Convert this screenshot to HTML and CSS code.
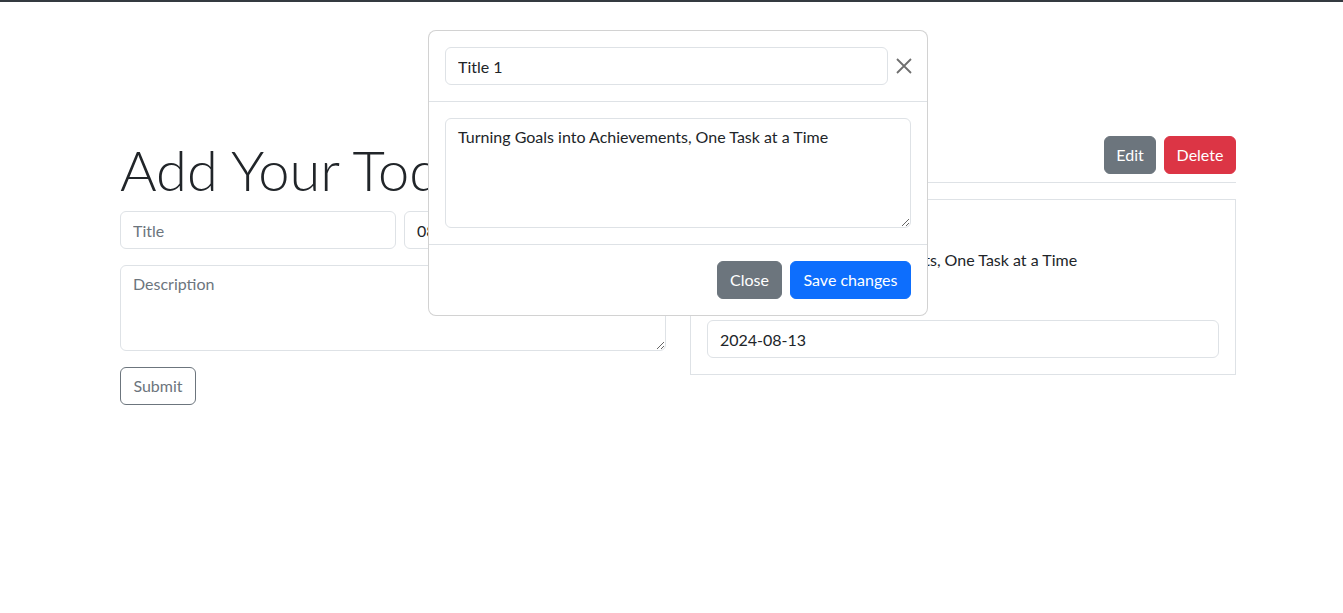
FILE: index.html
```html
<!DOCTYPE html>
<html lang="en">
<head>
<meta charset="utf-8">
<title>Todo</title>
<link rel="stylesheet" href="styles.css">
</head>
<body>
<div class="topbar"></div>
<main class="container">
  <section class="col">
    <h1 class="display">Add Your Todo</h1>
    <form class="add-form">
      <div class="form-row">
        <input class="form-control title-input" type="text" placeholder="Title">
        <input class="form-control date-input" type="text" value="08/13/2024">
      </div>
      <textarea class="form-control desc-input" rows="3" placeholder="Description"></textarea>
      <div><button type="button" class="btn btn-outline-secondary btn-submit">Submit</button></div>
    </form>
  </section>
  <section class="col">
    <div class="list-header">
      <h2 class="list-title">Your Todos</h2>
      <div class="actions">
        <button type="button" class="btn btn-secondary btn-edit">Edit</button>
        <button type="button" class="btn btn-danger btn-delete">Delete</button>
      </div>
    </div>
    <div class="card">
      <h5 class="card-title">Title 1</h5>
      <p class="card-text">Turning Goals into Achievements, One Task at a Time</p>
      <input class="form-control" type="text" value="2024-08-13">
    </div>
  </section>
</main>

<div class="modal">
  <div class="modal-header">
    <input class="form-control" type="text" value="Title 1">
    <button type="button" class="btn-close" aria-label="Close">
      <svg viewBox="0 0 16 16" width="16" height="16"><path d="M1 1L15 15M15 1L1 15" stroke="currentColor" stroke-width="1.8" fill="none"/></svg>
    </button>
  </div>
  <div class="modal-body">
    <textarea class="form-control modal-text" rows="4">Turning Goals into Achievements, One Task at a Time</textarea>
  </div>
  <div class="modal-footer">
    <button type="button" class="btn btn-secondary btn-closem">Close</button>
    <button type="button" class="btn btn-primary btn-save">Save changes</button>
  </div>
</div>
</body>
</html>
```
FILE: styles.css
```css
* { box-sizing: border-box; }
html, body { margin: 0; padding: 0; }
body {
  font-family: "Lato", "Open Sans", sans-serif;
  font-size: 16px;
  line-height: 1.5;
  color: #212529;
  background: #fff;
}
.topbar { height: 2px; background: #343a40; }

.container {
  width: 1116px;
  margin: 134px 0 0 120px;
  display: grid;
  grid-template-columns: 1fr 1fr;
  column-gap: 24px;
}

.display {
  font-size: 56px;
  font-weight: 300;
  line-height: 1.2;
  margin: 0 0 8px;
  white-space: nowrap;
}

.form-control {
  display: block;
  width: 100%;
  font-family: inherit;
  font-size: 16px;
  line-height: 24px;
  color: #212529;
  background: #fff;
  border: 1px solid #dee2e6;
  border-radius: 6px;
  padding: 6px 12px;
  height: 38px;
  outline: none;
}
.form-control::placeholder { color: #6c757d; opacity: 1; }
textarea.form-control { height: auto; resize: vertical; }

.add-form { display: flex; flex-direction: column; }
.form-row { display: flex; gap: 8px; }
.title-input { width: 276px; flex: none; }
.date-input { flex: 1; }
.desc-input { margin-top: 16px; height: 86px; }
.add-form > div:last-child { margin-top: 16px; }

.btn {
  display: inline-block;
  font-family: inherit;
  font-size: 16px;
  line-height: 24px;
  padding: 6px 0;
  text-align: center;
  border: 1px solid transparent;
  border-radius: 6px;
  cursor: pointer;
  background: transparent;
}
.btn-submit { width: 76px; }
.btn-edit { width: 52px; }
.btn-delete { width: 72px; }
.btn-closem { width: 65px; }
.btn-save { width: 121px; }
.btn-outline-secondary { color: #6c757d; border-color: #6c757d; }
.btn-secondary { color: #fff; background: #6c757d; border-color: #6c757d; }
.btn-danger { color: #fff; background: #dc3545; border-color: #dc3545; }
.btn-primary { color: #fff; background: #0d6efd; border-color: #0d6efd; }

.list-header {
  display: flex;
  justify-content: space-between;
  align-items: center;
  padding-bottom: 8px;
  border-bottom: 1px solid #dee2e6;
}
.list-title { margin: 0; font-size: 28px; font-weight: 500; line-height: 1.2; }
.actions { display: flex; gap: 8px; }

.card {
  margin-top: 16px;
  border: 1px solid #dee2e6;
  padding: 16px;
}
.card-title { margin: 0 0 8px; font-size: 20px; font-weight: 500; line-height: 1.2; }
.card-text { margin: 0 0 48px; }

.modal {
  position: absolute;
  left: 428px;
  top: 30px;
  width: 500px;
  background: #fff;
  border: 1px solid rgba(0,0,0,.175);
  border-radius: 8px;
}
.modal-header {
  display: flex;
  align-items: center;
  padding: 16px;
  border-bottom: 1px solid #dee2e6;
}
.modal-header .form-control { width: 443px; flex: none; }
.btn-close {
  width: 24px;
  height: 24px;
  margin-left: 4px;
  padding: 4px;
  border: 0;
  background: transparent;
  color: #6f6f6f;
  display: flex;
  align-items: center;
  justify-content: center;
  cursor: pointer;
}
.modal-body { padding: 16px; }
.modal-text { height: 110px; }
.modal-footer {
  display: flex;
  justify-content: flex-end;
  gap: 8px;
  padding: 16px;
  border-top: 1px solid #dee2e6;
}
```
